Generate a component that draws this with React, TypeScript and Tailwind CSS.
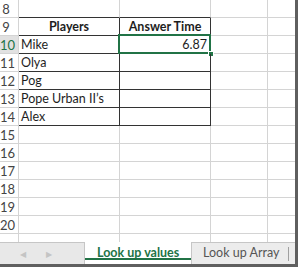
const rows = [8, 9, 10, 11, 12, 13, 14, 15, 16, 17, 18, 19, 20];

const data: Record<number, { b?: string; c?: string }> = {
  9: { b: 'Players', c: 'Answer Time' },
  10: { b: 'Mike', c: '6.87' },
  11: { b: 'Olya' },
  12: { b: 'Pog' },
  13: { b: 'Pope Urban II’s' },
  14: { b: 'Alex' },
};

const Row = ({ n }: { n: number }) => {
  const inTable = n >= 9 && n <= 14;
  const topOfTable = n === 8;
  const header = n === 9;
  const selected = n === 10;
  const cell = data[n] || {};

  const tableB = inTable
    ? 'border-r-[#333] border-b-[#333]'
    : topOfTable
      ? 'border-r-[#d4d4d4] border-b-[#333]'
      : 'border-r-[#d4d4d4] border-b-[#d4d4d4]';

  return (
    <div className="flex h-[18px] shrink-0">
      <div
        className={
          selected
            ? 'w-[19px] shrink-0 border-r border-b border-[#d4d4d4] bg-[#e1e1e1] pr-[6px] text-center text-[13px] leading-[18px] text-[#217346]'
            : 'w-[19px] shrink-0 border-r border-b border-[#d4d4d4] bg-white pr-[6px] text-center text-[13px] leading-[18px] text-[#444]'
        }
      >
        {n}
      </div>
      <div
        className={`w-[101px] shrink-0 border-r border-b px-[2px] text-[12.5px] leading-[18px] text-[#1e1e1e] ${tableB} ${
          header ? 'text-center font-bold' : ''
        }`}
      >
        {cell.b}
      </div>
      <div
        className={`relative w-[91px] shrink-0 border-r border-b px-[3px] text-[12.5px] leading-[18px] text-[#1e1e1e] ${tableB} ${
          header ? 'text-center font-bold' : 'text-right'
        }`}
      >
        {cell.c}
        {selected && (
          <>
            <div className="absolute -left-[2px] -top-[2px] h-[20px] w-[93px] border-2 border-[#217346]" />
            <div className="absolute -right-[4px] -bottom-[4px] h-[6px] w-[6px] border border-white bg-[#217346]" />
          </>
        )}
      </div>
      <div className="w-[57px] shrink-0 border-r border-b border-[#d4d4d4]" />
      <div className="flex-1 border-b border-[#d4d4d4]" />
    </div>
  );
};

export default function App() {
  return (
    <div
      className="h-[271px] w-[300px] overflow-hidden bg-white"
      style={{ fontFamily: 'Lato, "Open Sans", sans-serif' }}
    >
      <div className="flex h-[267px] w-[298px] flex-col border-r-[3px] border-b-[3px] border-[#5f5f5f]">
        <div className="flex h-[242px] flex-col overflow-hidden">
          {rows.map((n) => (
            <Row key={n} n={n} />
          ))}
          <div className="flex flex-1">
            <div className="w-[19px] border-r border-[#d4d4d4]" />
            <div className="w-[101px] border-r border-[#d4d4d4]" />
            <div className="w-[91px] border-r border-[#d4d4d4]" />
            <div className="w-[57px] border-r border-[#d4d4d4]" />
          </div>
        </div>

        <div className="flex h-[22px] bg-[#ececec]">
          <div className="flex w-[85px] items-center gap-[20px] border-t border-r border-[#c6c6c6] bg-[#e8e8e8] pl-[20px] text-[8px] text-[#c4c4c4]">
            <span>◀</span>
            <span>▶</span>
          </div>
          <div className="relative flex w-[106px] items-center bg-white pl-[12px] text-[12.5px] font-bold text-[#217346]">
            Look up values
            <div className="absolute bottom-[4px] left-0 h-[2px] w-full bg-[#217346]" />
          </div>
          <div className="flex w-[99px] items-center border-t border-l border-[#c6c6c6] pl-[11px] text-[12.5px] text-[#555]">
            <span className="flex-1">Look up Array</span>
            <span className="mr-[1px] h-[14px] w-px bg-[#a0a0a0]" />
          </div>
          <div className="flex-1 border-t border-[#c6c6c6]" />
        </div>
      </div>
    </div>
  );
}
